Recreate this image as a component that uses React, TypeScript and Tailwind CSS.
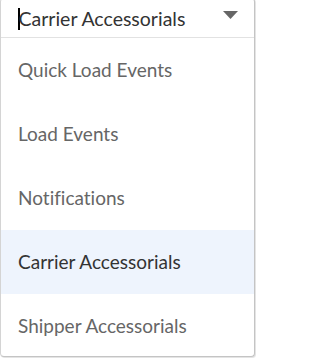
const items = [
  "Quick Load Events",
  "Load Events",
  "Notifications",
  "Carrier Accessorials",
  "Shipper Accessorials",
];

export default function App() {
  const selected = "Carrier Accessorials";
  return (
    <div
      className="h-[358px] w-[256px] overflow-hidden bg-white [font-variant-ligatures:none]"
      style={{ fontFamily: "Lato, sans-serif" }}
    >
      <div className="-mt-[2px] h-[359px] w-[255px] overflow-hidden rounded-[4px] border border-[#d4d4d4] border-r-[#c4c4c4] border-b-[#c4c4c4] bg-white shadow-[1px_1px_1px_rgba(0,0,0,0.12)]">
        <div className="flex h-[39px] items-center justify-between border-b border-[#e2e2e2] pl-[17px] pr-[16px]">
          <div className="mt-[2px] flex items-center text-[19.5px] leading-none text-[#333]">
            <span className="mr-[-1px] h-[22px] w-[1.5px] bg-black" />
            <span>Carrier Accessorials</span>
          </div>
          <svg width="15" height="8" viewBox="0 0 15 8" className="mb-[7px]">
            <path d="M0 0H15L7.5 8Z" fill="#666" />
          </svg>
        </div>
        <ul>
          {items.map((item) => (
            <li
              key={item}
              className={`flex h-[64px] items-center pl-[17px] text-[19px] ${
                item === selected ? "bg-[#eef4fd] text-[#333]" : "text-[#666]"
              }`}
            >
              {item}
            </li>
          ))}
        </ul>
      </div>
    </div>
  );
}
